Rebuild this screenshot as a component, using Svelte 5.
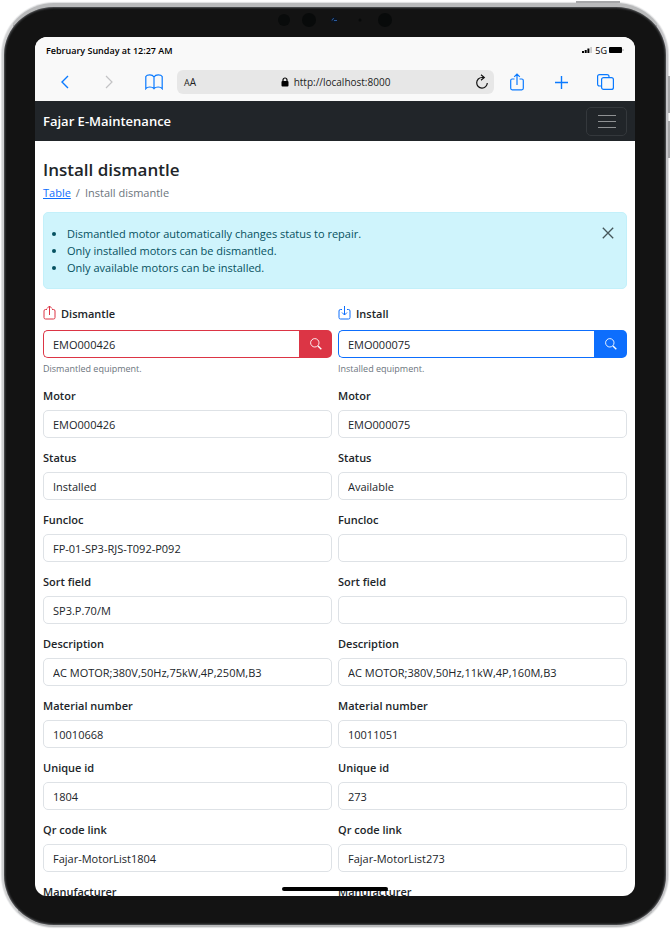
<script>
  const columns = [
    {
      id: 'dismantle',
      title: 'Dismantle',
      help: 'Dismantled equipment.',
      equipment: 'EMO000426',
      fields: [
        ['Motor', 'EMO000426'],
        ['Status', 'Installed'],
        ['Funcloc', 'FP-01-SP3-RJS-T092-P092'],
        ['Sort field', 'SP3.P.70/M'],
        ['Description', 'AC MOTOR;380V,50Hz,75kW,4P,250M,B3'],
        ['Material number', '10010668'],
        ['Unique id', '1804'],
        ['Qr code link', 'Fajar-MotorList1804'],
        ['Manufacturer', '']
      ]
    },
    {
      id: 'install',
      title: 'Install',
      help: 'Installed equipment.',
      equipment: 'EMO000075',
      fields: [
        ['Motor', 'EMO000075'],
        ['Status', 'Available'],
        ['Funcloc', ''],
        ['Sort field', ''],
        ['Description', 'AC MOTOR;380V,50Hz,11kW,4P,160M,B3'],
        ['Material number', '10011051'],
        ['Unique id', '273'],
        ['Qr code link', 'Fajar-MotorList273'],
        ['Manufacturer', '']
      ]
    }
  ];

  let showAlert = $state(true);
</script>

<div class="device">
  <span class="key power"></span>
  <span class="key vol-up"></span>
  <span class="key vol-down"></span>
  <svg class="sensors" width="116" height="16" viewBox="0 0 116 16" aria-hidden="true">
    <circle cx="7" cy="8" r="6" fill="#090b0b" />
    <circle cx="32" cy="8" r="7" fill="#080a0a" />
    <circle cx="57" cy="8" r="3" fill="#0b1420" />
    <path d="M55 8.5a2.2 2.2 0 0 1 2-2M57 8.500h3" stroke="#2c5a9c" fill="none" />
    <circle cx="83" cy="8" r="1.5" fill="#080a0a" />
    <circle cx="108" cy="8" r="7" fill="#080a0a" />
  </svg>

  <div class="screen">
    <div class="status">
      <span>February Sunday at 12:27 AM</span>
      <span class="signal">
        <svg width="11" height="8" viewBox="0 0 11 8" aria-hidden="true">
          <path d="M0 5h2v2H0zM2.7 4h2v3h-2zM5.4 2.5h2V7h-2z" fill="#000" />
          <path d="M8.3 1h1.6v6H8.3z" fill="#c4c4c4" />
        </svg>
        <span class="net">5G</span>
        <svg width="15" height="8" viewBox="0 0 15 8" aria-hidden="true">
          <rect x="0" y="1" width="13" height="6" rx="1" fill="#000" />
          <path d="M14 3v2" stroke="#aaa" />
        </svg>
      </span>
    </div>

    <div class="toolbar">
      <button class="tool back" aria-label="Back">
        <svg width="10" height="16" viewBox="0 0 10 16"><path d="M8 2 2 8l6 6" stroke="#0a7aff" stroke-width="1.4" /></svg>
      </button>
      <button class="tool forward" aria-label="Forward">
        <svg width="10" height="16" viewBox="0 0 10 16"><path d="m2 2 6 6-6 6" stroke="#c3c3c5" stroke-width="1.2" /></svg>
      </button>
      <button class="tool book" aria-label="Bookmarks">
        <svg width="18" height="16" viewBox="0 0 18 16">
          <path d="M9 3C8 1.3 6.5.9 4.8.9 3 .9 1.5 1.3.8 2.5v12.2c1-1.3 2.3-1.7 4-1.7 1.800 0 3.300.4 4.200 1.700.9-1.300 2.400-1.700 4.200-1.700 1.700 0 3 .4 4 1.700V2.500C16.500 1.300 15 .9 13.200.9 11.500.9 10 1.300 9 3zv11.700" stroke="#0a7aff" stroke-width="1.200" />
        </svg>
      </button>
      <div class="address">
        <span class="aa"><small>A</small>A</span>
        <span class="url">
          <svg width="8" height="10" viewBox="0 0 8 10" aria-hidden="true">
            <rect x=".5" y="4" width="7" height="5.500" rx="1" fill="#000" />
            <path d="M2 4.500V3a2 2 0 0 1 4 0v1.500" stroke="#000" stroke-width="1.200" />
          </svg>
          http://localhost:8000
        </span>
        <button class="reload" aria-label="Reload">
          <svg width="14" height="16" viewBox="0 0 14 16"><path d="M6 .8 9.300 3.500 6 6.300M9.300 3.500H7A5.300 5.300 0 1 0 12.300 9" stroke="#111" stroke-width="1.200" /></svg>
        </button>
      </div>
      <button class="tool share" aria-label="Share">
        <svg width="14" height="18" viewBox="0 0 14 18"><path d="M4.500 6H2.200Q.7 6 .7 7.500v7.800q0 1.500 1.500 1.500h9.600q1.500 0 1.500-1.500V7.500Q13.300 6 11.800 6H9.500M7 12V1M4.200 3.800 7 1l2.800 2.800" stroke="#0a7aff" stroke-width="1.200" /></svg>
      </button>
      <button class="tool plus" aria-label="New tab">
        <svg width="13" height="13" viewBox="0 0 13 13"><path d="M6.500 0v13M0 6.500h13" stroke="#0a7aff" stroke-width="1.400" /></svg>
      </button>
      <button class="tool tabs" aria-label="Tabs">
        <svg width="17" height="16" viewBox="0 0 17 16">
          <rect x="4.600" y="3.600" width="11.800" height="11.800" rx="2" stroke="#0a7aff" stroke-width="1.200" />
          <path d="M4.500 12H2.600Q.6 12 .6 10V2.600Q.6.600 2.600.600H10q2 0 2 2v1" stroke="#0a7aff" stroke-width="1.200" />
        </svg>
      </button>
    </div>

    <nav>
      <a class="brand" href="#home">Fajar E-Maintenance</a>
      <button class="toggler" aria-label="Toggle navigation">
        <svg width="18" height="15" viewBox="0 0 18 15"><path d="M0 1.500h18M0 7.500h18M0 13.500h18" stroke="#8f9193" /></svg>
      </button>
    </nav>

    <main>
      <h1>Install dismantle</h1>
      <div class="crumbs">
        <a href="#table">Table</a><span class="sep">/</span><span>Install dismantle</span>
      </div>

      {#if showAlert}
        <div class="alert" role="alert">
          <ul>
            <li>Dismantled motor automatically changes status to repair.</li>
            <li>Only installed motors can be dismantled.</li>
            <li>Only available motors can be installed.</li>
          </ul>
          <button class="close" aria-label="Close" onclick={() => (showAlert = false)}>
            <svg width="12" height="12" viewBox="0 0 12 12"><path d="m.8.800 10.400 10.400M11.200.800.8 11.200" stroke="#45565a" stroke-width="1.300" /></svg>
          </button>
        </div>
      {/if}

      <form class="columns">
        {#each columns as col}
          <div class="column {col.id}">
            <label class="title" for={col.id}>
              <svg width="13" height="15" viewBox="0 0 13 15" aria-hidden="true">
                <path d="M4 4.500H2.500q-1.500 0-1.500 1.500v6.500Q1 14 2.500 14h8q1.500 0 1.500-1.500V6q0-1.500-1.500-1.500H9" />
                {#if col.id === 'dismantle'}
                  <path d="M6.500 10V1M4 3.500 6.500 1 9 3.500" />
                {:else}
                  <path d="M6.500 1v9M4 7.500 6.500 10 9 7.500" />
                {/if}
              </svg>
              {col.title}
            </label>
            <div class="group">
              <input id={col.id} type="text" value={col.equipment} />
              <button type="button" aria-label="Search">
                <svg width="12" height="12" viewBox="0 0 12 12"><circle cx="4.800" cy="4.800" r="4.200" stroke="#fff" stroke-width=".9" /><path d="m8 8 3.300 3.300" stroke="#fff" stroke-width="1.400" /></svg>
              </button>
            </div>
            <div class="help">{col.help}</div>
            {#each col.fields as [name, value], i}
              <label class="name" for="{col.id}-{i}">{name}</label>
              <input class="field" id="{col.id}-{i}" type="text" {value} />
            {/each}
          </div>
        {/each}
      </form>
    </main>
    <span class="home"></span>
  </div>
</div>

<style>
  :global(body) {
    background: #fff;
  }
  * {
    box-sizing: border-box;
  }
  svg {
    display: block;
    flex: none;
    fill: none;
  }
  button {
    display: flex;
    align-items: center;
    justify-content: center;
    padding: 0;
    border: 0;
    background: none;
    font: inherit;
  }
  .device {
    position: relative;
    height: calc(100vh - 5px);
    margin: 3px 3px 2px 2px;
    padding: 30px 31px 29px 31px;
    border: 2px solid #b9babb;
    border-top-width: 4px;
    border-left-color: #cfd0d1;
    border-right-color: #c5c5c8;
    border-radius: 52px;
    background: #131313;
    box-shadow: inset 0 0 2px 1px #55575a, 0 0 1px 1px #dedfe0;
    color: #212529;
    font-family: "Open Sans", "Noto Sans", sans-serif;
    font-size: 11px;
  }
  .key {
    position: absolute;
    background: #a5a6a8;
  }
  .power {
    top: -6px;
    right: 46px;
    width: 44px;
    height: 2px;
  }
  .vol-up,
  .vol-down {
    right: -4px;
    width: 2px;
    height: 37px;
  }
  .vol-up {
    top: 69px;
  }
  .vol-down {
    top: 114px;
  }
  .sensors {
    position: absolute;
    top: 5px;
    left: calc(50% - 58px);
  }
  .screen {
    position: relative;
    display: flex;
    flex-direction: column;
    height: 100%;
    overflow: hidden;
    border-radius: 12px;
    background: #fff;
  }
  .status {
    display: flex;
    justify-content: space-between;
    flex: none;
    height: 26px;
    padding: 0 11px;
    background: #f9f9f9;
    color: #000;
    font-size: 9px;
    font-weight: 600;
    line-height: 27px;
  }
  .signal {
    display: flex;
    align-items: center;
    gap: 2px;
  }
  .net {
    font-weight: 400;
  }
  .toolbar {
    display: flex;
    align-items: center;
    flex: none;
    height: 38px;
    padding: 0 21px 0 25px;
    background: #f9f9f9;
  }
  .forward {
    margin-left: 34px;
  }
  .book {
    margin-left: 31px;
  }
  .address {
    display: flex;
    align-items: center;
    flex: 1;
    height: 24px;
    margin: 0 16px 0 14px;
    padding: 0 5px 0 7px;
    border-radius: 6px;
    background: #e7e7e7;
    color: #222;
    font-size: 10px;
  }
  .aa small {
    font-size: 9px;
  }
  .url {
    display: flex;
    align-items: center;
    justify-content: center;
    flex: 1;
    gap: 5px;
  }
  .plus {
    margin-left: 31px;
  }
  .tabs {
    margin-left: 29px;
  }
  nav {
    display: flex;
    align-items: center;
    justify-content: space-between;
    flex: none;
    height: 40px;
    padding: 0 8px;
    background: #212529;
  }
  .brand {
    color: #fff;
    font-size: 13px;
    font-weight: 600;
    text-decoration: none;
  }
  .toggler {
    width: 41px;
    height: 29px;
    border: 1px solid #34383c;
    border-radius: 5px;
  }
  main {
    flex: 1;
    min-height: 0;
    padding: 16px 8px 0;
    overflow: hidden;
  }
  h1 {
    margin: 0;
    font-size: 17px;
    font-weight: 600;
    line-height: 26px;
  }
  .crumbs {
    margin: 1px 0 10px;
    color: #6c757d;
    line-height: 18px;
  }
  .crumbs a {
    color: #0d6efd;
  }
  .sep {
    padding: 0 5px;
  }
  .alert {
    display: flex;
    justify-content: space-between;
    align-items: flex-start;
    padding: 12px;
    border: 1px solid #c3f0fa;
    border-radius: 5px;
    background: #cff4fc;
    color: #055160;
  }
  ul {
    margin: 0;
    padding-left: 11px;
    line-height: 17px;
  }
  .close {
    padding-top: 2px;
  }
  .columns {
    display: flex;
    gap: 6px;
    padding-top: 16px;
  }
  .column {
    --accent: #dc3545;
    flex: 1;
    min-width: 0;
  }
  .install {
    --accent: #0d6efd;
  }
  label {
    display: block;
    font-weight: 600;
    line-height: 18px;
  }
  .title {
    display: flex;
    gap: 5px;
    margin-bottom: 7px;
  }
  .title svg {
    stroke: var(--accent);
  }
  input {
    width: 100%;
    min-width: 0;
    height: 28px;
    padding: 0 9px;
    border: 1px solid #dee2e6;
    border-radius: 5px;
    background: #fff;
    color: #212529;
    font: inherit;
  }
  .group {
    display: flex;
  }
  .group input {
    flex: 1;
    border-color: var(--accent);
    border-right: 0;
    border-radius: 5px 0 0 5px;
  }
  .group button {
    width: 33px;
    border-radius: 0 5px 5px 0;
    background: var(--accent);
  }
  .help {
    margin: 4px 0 11px;
    color: #6c757d;
    font-size: 9px;
    line-height: 14px;
  }
  .field {
    display: block;
    margin: 5px 0 11px;
  }
  .home {
    position: absolute;
    bottom: 5px;
    left: calc(50% - 53px);
    width: 106px;
    height: 4px;
    border-radius: 2px;
    background: #000;
  }
</style>
